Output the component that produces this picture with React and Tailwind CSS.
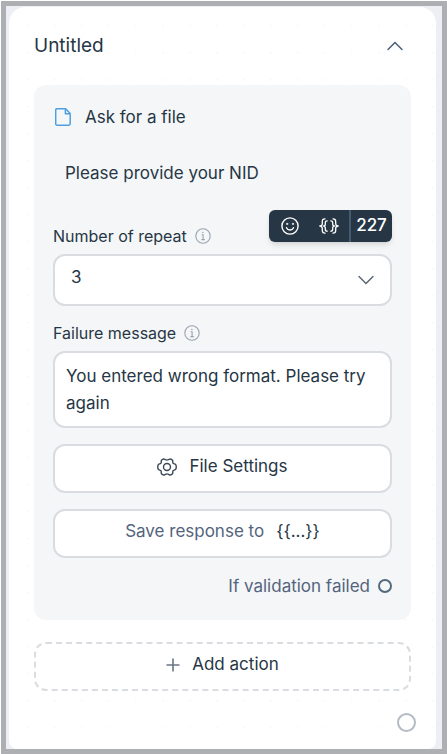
/**
 * App.jsx
 * -------
 * Flow builder node: "Ask for a file" block with its settings.
 */
import { useState } from 'react'

const fieldBox = 'block w-full rounded-xl border-2 border-[#d9dce0] bg-white text-[#263645] outline-none'

export default function App() {
  const [question, setQuestion] = useState('Please provide your NID')
  const [repeat, setRepeat] = useState('3')
  const [failure, setFailure] = useState('You entered wrong format. Please try again')

  return (
    <div className="min-h-screen bg-white pt-px pl-px flex flex-col font-['Inter',sans-serif] text-[#263645]">
      <main className="flex-1 flex flex-col border-5 border-[#adafb2] bg-[#eeeff4] pt-px pl-[3px] pr-[6px]">
        <section
          className="flex-1 rounded-t-2xl rounded-b-lg px-[25px] bg-white
                     bg-[radial-gradient(circle,#f7f8f9_1px,transparent_1px)] bg-size-[27px_27px] bg-position-[5px_5px]"
        >
          {/* Header */}
          <header className="flex items-center justify-between h-[78px] pr-2">
            <h1 className="text-[19px] leading-6">Untitled</h1>
            <button type="button" aria-label="Collapse" className="text-[#475d75]">
              <ChevronIcon up />
            </button>
          </header>

          {/* Action panel */}
          <div className="rounded-xl bg-[#f5f6f8] px-[19px] pt-5 pb-[22px]">
            <div className="flex items-center gap-3.5 pl-0.5">
              <FileIcon />
              <h2 className="text-[17px] leading-6">Ask for a file</h2>
            </div>

            <div className="relative pt-8 pb-[39px]">
              <textarea
                aria-label="Question"
                rows={1}
                value={question}
                onChange={(e) => setQuestion(e.target.value)}
                className="block w-full resize-none overflow-hidden bg-transparent px-3 text-[17px] leading-6 outline-none"
              />
              {/* Text tools */}
              <div className="absolute right-0 -bottom-[18px] flex h-8 pl-px rounded-md bg-[#263645] text-white shadow-md">
                <button type="button" aria-label="Insert emoji" className="w-[39px] flex items-center justify-center">
                  <SmileIcon />
                </button>
                <button type="button" aria-label="Insert variable" className="w-[39px] flex items-center justify-center">
                  <BracesIcon />
                </button>
                <span className="ml-px w-[43px] border-l-2 border-[#435a73] flex items-center justify-center text-[17px] font-medium">
                  227
                </span>
              </div>
            </div>

            <FieldLabel htmlFor="repeat">Number of repeat</FieldLabel>
            <div className="relative mt-1.5">
              <select
                id="repeat"
                value={repeat}
                onChange={(e) => setRepeat(e.target.value)}
                className={`${fieldBox} h-[52px] appearance-none px-4 pb-1 text-[17px]`}
              >
                <option>1</option>
                <option>2</option>
                <option>3</option>
              </select>
              <span className="pointer-events-none absolute inset-y-0 right-[18px] flex items-center text-[#5a6572]">
                <ChevronIcon />
              </span>
            </div>

            <div className="mt-[15px]">
              <FieldLabel htmlFor="failure">Failure message</FieldLabel>
              <textarea
                id="failure"
                rows={2}
                value={failure}
                onChange={(e) => setFailure(e.target.value)}
                className={`${fieldBox} mt-1.5 h-[77px] resize-none overflow-hidden px-[11px] py-2.5 text-[17px] leading-[27px]`}
              />
            </div>

            <button type="button" className={`${fieldBox} mt-4 h-[49px] pb-1 text-[17px]`}>
              <span className="flex items-center justify-center gap-3">
                <GearIcon />
                File Settings
              </span>
            </button>

            <button type="button" className={`${fieldBox} mt-4 h-[49px] pb-1 text-[17px]`}>
              <span className="text-[#53647d]">Save response to</span>
              <span className="ml-3">{'{{...}}'}</span>
            </button>

            <div className="mt-4 flex items-center justify-end gap-2 text-[17px] leading-6 text-[#53647d]">
              If validation failed
              <span className="size-3.5 rounded-full border-2 border-[#53697d]" />
            </div>
          </div>

          <button
            type="button"
            className="mt-[22px] flex h-[49px] w-full items-center justify-center gap-3 rounded-xl
                       border-2 border-dashed border-[#d9dce0] bg-white pb-1 text-[17px]"
          >
            <PlusIcon />
            Add action
          </button>

          {/* Output connector */}
          <div className="mt-[22px] mb-4 flex justify-end">
            <span className="-mr-[5px] size-[19px] rounded-full border-2 border-[#b4bbc5] bg-white" />
          </div>
        </section>
      </main>
    </div>
  )
}

function FieldLabel({ htmlFor, children }) {
  return (
    <div className="flex items-center gap-2">
      <label htmlFor={htmlFor} className="text-base leading-6">{children}</label>
      <InfoIcon />
    </div>
  )
}

function ChevronIcon({ up }) {
  return (
    <svg width="16" height="10" viewBox="0 0 16 10" fill="none" stroke="currentColor" strokeWidth="1.4" strokeLinecap="round">
      <path d={up ? 'M1 8.6 8 1.4l7 7.2' : 'M1 1.4 8 8.6l7-7.2'} />
    </svg>
  )
}

function FileIcon() {
  return (
    <svg width="16" height="18" viewBox="0 0 16 18" fill="none" stroke="#4f9fe0" strokeWidth="1.5" strokeLinejoin="round">
      <path d="M2 .8h8.6l4.6 4.8v10.2a1.4 1.4 0 0 1-1.4 1.4H2A1.3 1.3 0 0 1 .7 15.900V2.100A1.3 1.3 0 0 1 2 .8Z" />
      <path d="M10.400 1v4.800h4.600" />
    </svg>
  )
}

function InfoIcon() {
  return (
    <svg width="16" height="16" viewBox="0 0 16 16" fill="none" stroke="#97a3b0" strokeWidth="1.1">
      <circle cx="8" cy="8" r="7.2" />
      <path d="M6.6 6.8h1.5v4.800M6.400 11.600h3.400" />
      <circle cx="7.900" cy="4.400" r=".5" fill="#97a3b0" strokeWidth=".5" />
    </svg>
  )
}

function SmileIcon() {
  return (
    <svg width="18" height="18" viewBox="0 0 18 18" fill="none" stroke="currentColor" strokeWidth="1.4" strokeLinecap="round">
      <circle cx="9" cy="9" r="8.1" />
      <path d="M5.500 10.700c.7 1.500 2 2.300 3.500 2.300s2.800-.8 3.500-2.300" />
      <circle cx="6.100" cy="6.900" r=".7" fill="currentColor" strokeWidth=".6" />
      <circle cx="11.900" cy="6.900" r=".7" fill="currentColor" strokeWidth=".6" />
    </svg>
  )
}

function BracesIcon() {
  return (
    <svg width="20" height="16" viewBox="0 0 20 16" fill="none" stroke="currentColor" strokeWidth="1.3" strokeLinecap="round" strokeLinejoin="round">
      <path d="M6 .8C3.9.8 3.3 1.8 3.3 3.4v2C3.3 7 2.6 8 .8 8c1.8 0 2.5 1 2.5 2.6v2c0 1.6.6 2.6 2.700 2.600" />
      <path d="M8.2 2.8C6.6 2.8 6.3 3.6 6.3 4.8v1.2C6.3 7.2 5.7 8 4.6 8c1.100 0 1.700.8 1.700 2v1.200c0 1.200.3 2 1.900 2" />
      <path d="M14 .8c2.100 0 2.700 1 2.700 2.600v2C16.700 7 17.400 8 19.200 8c-1.800 0-2.500 1-2.500 2.600v2c0 1.600-.6 2.600-2.700 2.600" />
      <path d="M11.800 2.800c1.600 0 1.900.8 1.900 2v1.200c0 1.200.6 2 1.700 2-1.100 0-1.700.8-1.700 2v1.200c0 1.200-.3 2-1.900 2" />
    </svg>
  )
}

function GearIcon() {
  return (
    <svg width="20" height="18" viewBox="0 0 20 18" fill="none" stroke="#3a4856" strokeWidth="1.4" strokeLinejoin="round">
      <path d="M6.600.9C7.600.8 8.400 2.100 10 2.100S12.400.8 13.400.9l2.100 1.200c.7.9-.1 1.900.4 2.900.5 1 2.600.9 3 1.900.3.900.3 3.300 0 4.200-.4 1-2.500.9-3 1.900-.5 1 .3 2-.4 2.900l-2.100 1.200c-1 .1-1.800-1.200-3.400-1.200s-2.400 1.300-3.400 1.200l-2.100-1.200c-.7-.9.1-1.900-.4-2.900-.5-1-2.600-.9-3-1.900-.3-.9-.3-3.300 0-4.200.4-1 2.500-.9 3-1.900.5-1-.3-2 .4-2.900Z" />
      <circle cx="10" cy="9" r="3.500" />
    </svg>
  )
}

function PlusIcon() {
  return (
    <svg width="14" height="14" viewBox="0 0 14 14" fill="none" stroke="#6a7684" strokeWidth="1.6">
      <path d="M7 .5v13M.5 7h13" />
    </svg>
  )
}
